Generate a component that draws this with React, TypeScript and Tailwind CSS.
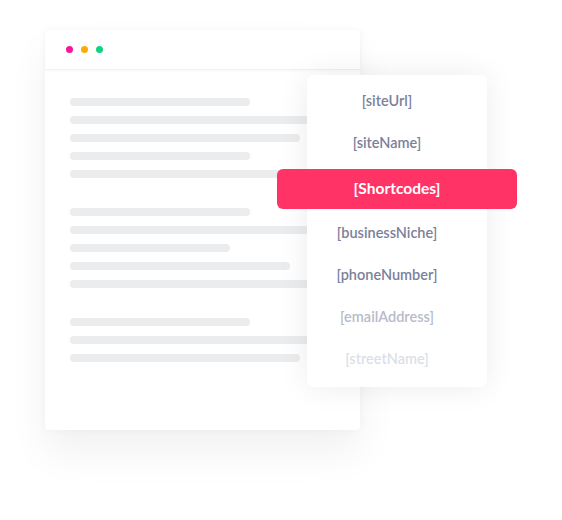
const lineGroups: number[][] = [
  [180, 260, 230, 180, 260],
  [180, 260, 160, 220, 260],
  [180, 260, 230],
];

interface Item {
  label: string;
  tone: string;
}

const items: Item[] = [
  { label: "[siteUrl]", tone: "text-[#7b819b]" },
  { label: "[siteName]", tone: "text-[#7b819b]" },
];

const itemsAfter: Item[] = [
  { label: "[businessNiche]", tone: "text-[#7b819b]" },
  { label: "[phoneNumber]", tone: "text-[#7b819b]" },
  { label: "[emailAddress]", tone: "text-[#b7bbcb]" },
  { label: "[streetName]", tone: "text-[#dcdfe7]" },
];

const MenuItem = ({ label, tone }: Item) => (
  <div className={`h-[42px] flex items-center justify-center pr-5 text-[14.5px] font-semibold ${tone}`}>
    {label}
  </div>
);

const App = () => {
  return (
    <div
      className="relative w-[562px] h-[520px] bg-white overflow-hidden"
      style={{ fontFamily: "Lato, 'Open Sans', sans-serif" }}
    >
      {/* Document window */}
      <div className="ml-[45px] mt-[30px] w-[315px] h-[400px] bg-white rounded-[4px] shadow-[0_22px_40px_rgba(0,0,0,0.06),0_0_10px_rgba(0,0,0,0.03)]">
        <div className="h-[40px] flex items-center gap-2 pl-[21px] border-b border-[#f1f1f3] shadow-[0_1px_3px_rgba(0,0,0,0.03)]">
          <span className="w-[7px] h-[7px] rounded-full bg-[#f7159b]" />
          <span className="w-[7px] h-[7px] rounded-full bg-[#ffa90a]" />
          <span className="w-[7px] h-[7px] rounded-full bg-[#0ed47f]" />
        </div>
        <div className="pl-[25px] pt-[28px] flex flex-col gap-[30px]">
          {lineGroups.map((group, gi) => (
            <div key={gi} className="flex flex-col gap-[10px]">
              {group.map((w, li) => (
                <div
                  key={li}
                  className="h-[8px] rounded-full bg-[#ebecee]"
                  style={{ width: w }}
                />
              ))}
            </div>
          ))}
        </div>
      </div>

      {/* Shortcode menu */}
      <div className="absolute left-[307px] top-[75px] w-[180px] h-[312px] bg-white rounded-[6px] shadow-[0_0_30px_rgba(0,0,0,0.08)] pt-[5px] flex flex-col">
        {items.map((it) => (
          <MenuItem key={it.label} {...it} />
        ))}
        <div className="-ml-[30px] w-[240px] h-[40px] mt-[5px] mb-[3px] rounded-[6px] bg-[#ff3366] flex items-center justify-center text-white text-[15.5px] font-bold">
          [Shortcodes]
        </div>
        {itemsAfter.map((it) => (
          <MenuItem key={it.label} {...it} />
        ))}
      </div>
    </div>
  );
};

export default App;
